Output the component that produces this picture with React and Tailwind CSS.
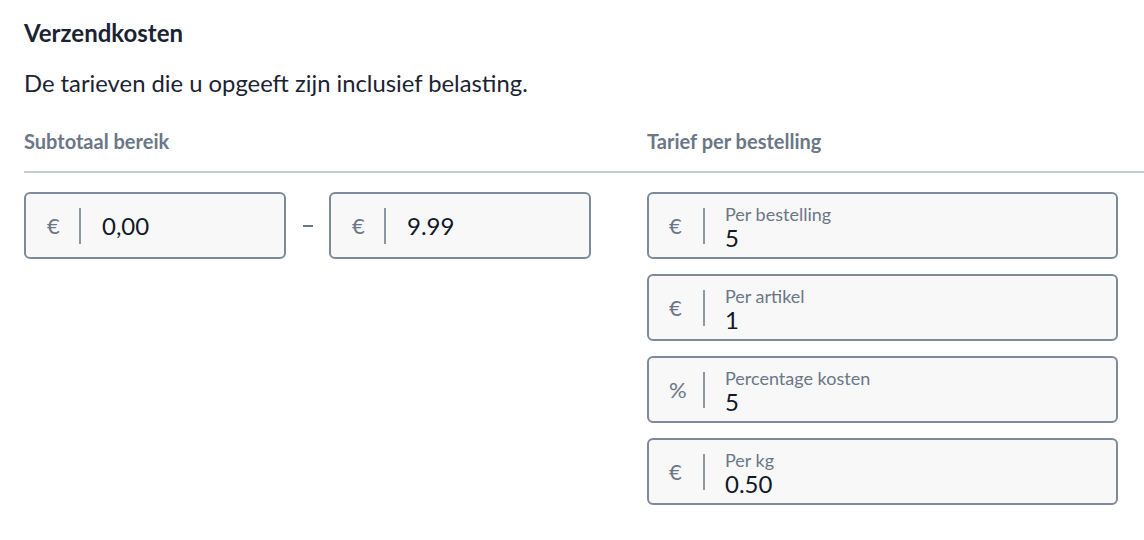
import React from "react";

const font = { fontFamily: "Lato, 'Noto Sans', sans-serif" };

function RangeInput({ value }) {
  return (
    <div className="flex h-[67px] flex-1 items-center rounded-[6px] border-2 border-[#7f8a99] bg-[#f8f8f8] pl-[21px]">
      <span className="w-[14px] text-[22px] leading-none text-[#6b7687]">€</span>
      <div className="ml-[18px] h-9 w-[2px] bg-[#8d96a3]" />
      <span className="ml-[21px] text-[24px] leading-none text-[#111827]">{value}</span>
    </div>
  );
}

function RateInput({ prefix, label, value }) {
  return (
    <div className="flex h-[67px] items-center rounded-[6px] border-2 border-[#7f8a99] bg-[#f8f8f8] pl-5">
      <span className="w-[16px] text-[22px] leading-none text-[#6b7687]">{prefix}</span>
      <div className="ml-[18px] h-9 w-[2px] bg-[#8d96a3]" />
      <div className="ml-[20px] flex flex-col pt-[3px]">
        <span className="text-[18px] leading-[21px] text-[#6b7687]">{label}</span>
        <span className="text-[24px] leading-[26px] text-[#111827]">{value}</span>
      </div>
    </div>
  );
}

export default function App() {
  return (
    <div className="min-h-screen bg-white pl-6 pt-[17px]" style={font}>
      <h2 className="text-[24px] font-bold leading-8 text-[#1b2332]">Verzendkosten</h2>
      <p className="mt-[18px] text-[23.8px] leading-8 text-[#1b2332]">
        De tarieven die u opgeeft zijn inclusief belasting.
      </p>

      <div className="mt-[30px] flex text-[20px] font-bold leading-6 text-[#6b7687]">
        <div className="w-[623px]">Subtotaal bereik</div>
        <div>Tarief per bestelling</div>
      </div>
      <div className="mt-[18px] h-[2px] bg-[#c6cbd2]" />

      <div className="mt-[19px] flex items-start">
        <div className="flex w-[567px] items-center">
          <RangeInput value="0,00" />
          <div className="flex w-[43px] justify-center">
            <div className="h-[2px] w-[10px] bg-[#6b7687]" />
          </div>
          <RangeInput value="9.99" />
        </div>
        <div className="ml-[56px] flex w-[471px] flex-col gap-[15px]">
          <RateInput prefix="€" label="Per bestelling" value="5" />
          <RateInput prefix="€" label="Per artikel" value="1" />
          <RateInput prefix="%" label="Percentage kosten" value="5" />
          <RateInput prefix="€" label="Per kg" value="0.50" />
        </div>
      </div>
    </div>
  );
}
